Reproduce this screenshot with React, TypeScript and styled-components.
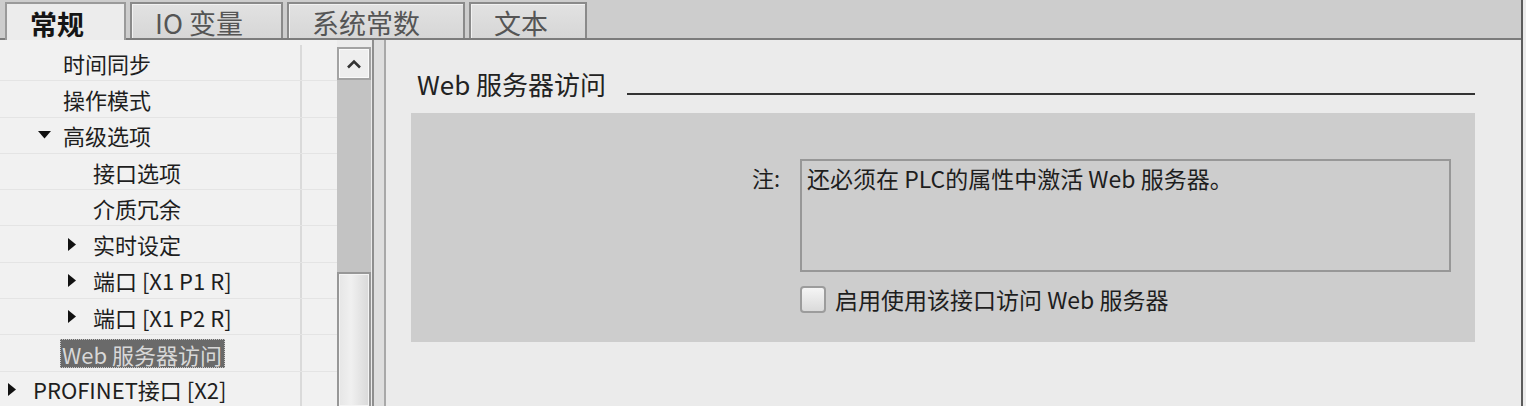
import React from "react";
import styled, { createGlobalStyle, css } from "styled-components";

const Global = createGlobalStyle`
  html, body { margin: 0; padding: 0; background: #ebebeb; overflow: hidden; }
  body { font-family: "Noto Sans CJK SC", "Noto Sans", sans-serif; color: #1e1e1e; }
`;

const Frame = styled.div`
  width: 1521px;
  height: 406px;
  display: flex;
  flex-direction: column;
  border-right: 2px solid #5c5c5c;
  overflow: hidden;
`;

const TabBar = styled.div`
  height: 40px;
  flex: none;
  display: flex;
  align-items: flex-end;
  gap: 4px;
  padding-left: 5px;
  background: #cdcdcd;
  box-shadow: inset 0 -2px 0 #7c7c7c;
`;

const Tab = styled.div<{ $active?: boolean; $w: number }>`
  box-sizing: border-box;
  width: ${(p) => p.$w}px;
  padding-left: 23px;
  padding-top: 2px;
  display: flex;
  align-items: center;
  font-size: 27px;
  line-height: 1;
  border: 2px solid #8a8a8a;
  border-bottom: none;
  ${(p) =>
    p.$active
      ? css`
          background: #ececec;
          font-weight: 700;
          color: #151515;
          height: 38px;
          border-color: #9a9a9a;
        `
      : css`
          background: linear-gradient(#e2e2e2, #d6d6d6);
          color: #555;
          height: 36px;
          margin-bottom: 2px;
          box-shadow: inset 1px 1px 0 #f2f2f2;
        `}
`;

const Main = styled.div`
  flex: 1;
  display: flex;
  min-height: 0;
`;

const Tree = styled.div`
  width: 337px;
  flex: none;
  background: #f1f1f1;
  padding-top: 5px;
  display: flex;
  flex-direction: column;
`;

const Row = styled.div`
  height: 36.3px;
  flex: none;
  display: grid;
  grid-template-columns: 302px 35px;
  border-bottom: 1px solid #e4e4e4;
  box-sizing: border-box;
`;

const NameCell = styled.div<{ $level: number }>`
  display: flex;
  align-items: center;
  padding-left: ${(p) => 8 + p.$level * 30}px;
  border-right: 2px solid #dadada;
  font-size: 22px;
  line-height: 1;
  white-space: nowrap;
`;

const ArrowSlot = styled.span`
  width: 25px;
  flex: none;
  display: flex;
  align-items: center;
`;

const Label = styled.span<{ $selected?: boolean }>`
  ${(p) =>
    p.$selected &&
    css`
      background: #6a6a6a;
      color: #d8d8d8;
      margin-left: -3px;
      padding: 4px 3px 3px 2px;
      outline: 1px dotted #c8c8c8;
      outline-offset: -1px;
    `}
`;

const ScrollBar = styled.div`
  width: 34px;
  flex: none;
  padding-top: 7px;
  background: #ececec;
  display: flex;
  flex-direction: column;
`;

const UpButton = styled.div`
  box-sizing: border-box;
  height: 33px;
  flex: none;
  border: 2px solid #a3a3a3;
  background: #eeeeee;
  box-shadow: inset 0 0 0 1px #fafafa;
  display: flex;
  align-items: center;
  justify-content: center;
`;

const Track = styled.div`
  height: 192px;
  flex: none;
  background: #c3c3c3;
`;

const Thumb = styled.div`
  flex: 1;
  box-sizing: border-box;
  border: 2px solid #979797;
  border-bottom: none;
  box-shadow: inset 0 0 0 1px #f4f4f4;
  background: linear-gradient(90deg, #e6e6e6, #f0f0f0 40%, #d9d9d9);
`;

const Splitter = styled.div`
  width: 14px;
  flex: none;
  margin-left: 1px;
  margin-right: 3px;
  box-sizing: border-box;
  border-left: 2px solid #8e8e8e;
  border-right: 2px solid #a8a8a8;
  background: #dedede;
`;

const Content = styled.div`
  flex: 1;
  background: #ebebeb;
  padding: 29px 46px 0 22px;
  display: flex;
  flex-direction: column;
`;

const HeadingRow = styled.div`
  display: flex;
  align-items: flex-end;
  gap: 21px;
  padding-left: 6px;
  height: 30px;
`;

const Heading = styled.div`
  font-size: 26px;
  line-height: 30px;
  color: #222;
  white-space: nowrap;
`;

const HeadingLine = styled.div`
  flex: 1;
  height: 2px;
  background: #333;
  margin-bottom: 4px;
`;

const Panel = styled.div`
  margin-top: 14px;
  height: 229px;
  background: #cdcdcd;
  padding-top: 46px;
  box-sizing: border-box;
  display: grid;
  grid-template-columns: 369px 651px;
  column-gap: 20px;
  row-gap: 14px;
  align-content: start;
`;

const FieldLabel = styled.div`
  text-align: right;
  font-size: 22px;
  line-height: 26px;
  padding-top: 5px;
`;

const NoteBox = styled.div`
  box-sizing: border-box;
  height: 113px;
  border: 2px solid #979797;
  padding: 4px 5px;
  font-size: 23px;
  line-height: 27px;
  color: #1e1e1e;
`;

const CheckRow = styled.label`
  grid-column: 2;
  display: flex;
  align-items: center;
  gap: 9px;
  font-size: 23px;
  line-height: 27px;
`;

const Box = styled.span`
  box-sizing: border-box;
  width: 26px;
  height: 27px;
  border: 2px solid #9c9c9c;
  border-radius: 4px;
  background: linear-gradient(#f5f5f5, #dadada);
`;

const Down = () => (
  <svg width="13" height="8" viewBox="0 0 13 8">
    <polygon points="0,0 13,0 6.5,7.5" fill="#111" />
  </svg>
);
const Right = () => (
  <svg width="8" height="13" viewBox="0 0 8 13">
    <polygon points="0,0 8,6.5 0,13" fill="#111" />
  </svg>
);

type Item = { label: string; level: number; arrow?: "down" | "right"; selected?: boolean };

const items: Item[] = [
  { label: "时间同步", level: 1 },
  { label: "操作模式", level: 1 },
  { label: "高级选项", level: 1, arrow: "down" },
  { label: "接口选项", level: 2 },
  { label: "介质冗余", level: 2 },
  { label: "实时设定", level: 2, arrow: "right" },
  { label: "端口 [X1 P1 R]", level: 2, arrow: "right" },
  { label: "端口 [X1 P2 R]", level: 2, arrow: "right" },
  { label: "Web 服务器访问", level: 1, selected: true },
  { label: "PROFINET接口 [X2]", level: 0, arrow: "right" },
];

const tabs = [
  { label: "常规", w: 121, active: true },
  { label: "IO 变量", w: 153 },
  { label: "系统常数", w: 178 },
  { label: "文本", w: 118 },
];

export default function App() {
  return (
    <>
      <Global />
      <Frame>
        <TabBar>
          {tabs.map((t) => (
            <Tab key={t.label} $active={t.active} $w={t.w}>
              {t.label}
            </Tab>
          ))}
        </TabBar>
        <Main>
          <Tree>
            {items.map((it) => (
              <Row key={it.label}>
                <NameCell $level={it.level}>
                  <ArrowSlot>
                    {it.arrow === "down" ? <Down /> : it.arrow === "right" ? <Right /> : null}
                  </ArrowSlot>
                  <Label $selected={it.selected}>{it.label}</Label>
                </NameCell>
                <div />
              </Row>
            ))}
          </Tree>
          <ScrollBar>
            <UpButton>
              <svg width="16" height="10" viewBox="0 0 16 10">
                <polyline points="2,8.5 8,2.5 14,8.5" fill="none" stroke="#333" strokeWidth="2.6" />
              </svg>
            </UpButton>
            <Track />
            <Thumb />
          </ScrollBar>
          <Splitter />
          <Content>
            <HeadingRow>
              <Heading>Web 服务器访问</Heading>
              <HeadingLine />
            </HeadingRow>
            <Panel>
              <FieldLabel>注:</FieldLabel>
              <NoteBox>还必须在 PLC的属性中激活 Web 服务器。</NoteBox>
              <CheckRow>
                <Box />
                启用使用该接口访问 Web 服务器
              </CheckRow>
            </Panel>
          </Content>
        </Main>
      </Frame>
    </>
  );
}
